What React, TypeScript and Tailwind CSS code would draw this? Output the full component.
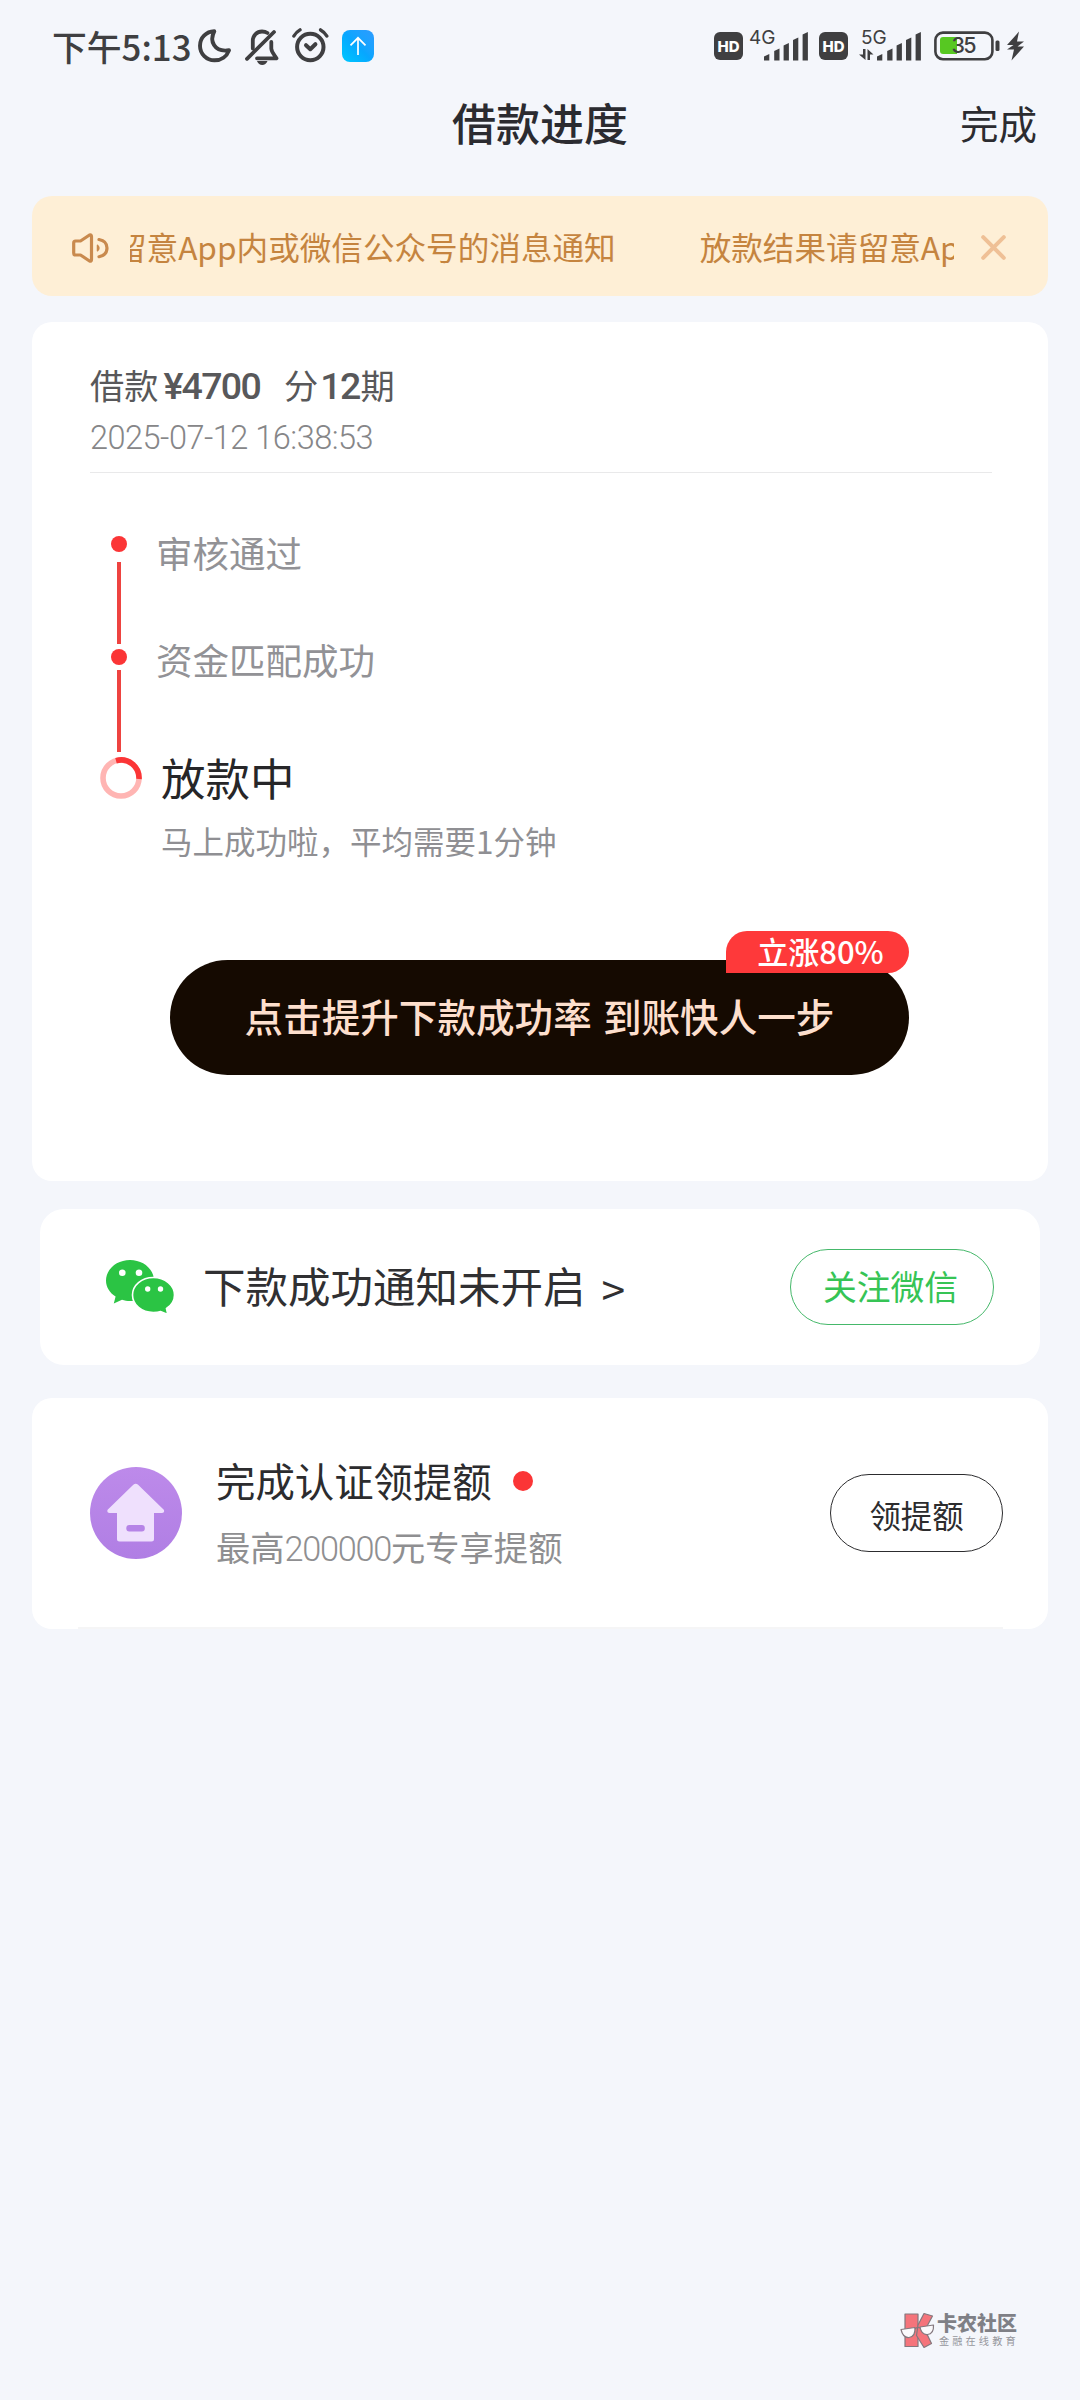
import { type FC } from 'react'

const SIGNAL_BARS = [
  { x: 0, h: 7 },
  { x: 10.2, h: 12.5 },
  { x: 19.6, h: 18 },
  { x: 29, h: 23.5 },
  { x: 38.6, h: 29 },
]

const SignalBars: FC = () => (
  <svg width={44} height={30} viewBox="0 0 44 30" fill="#3f3f41">
    {SIGNAL_BARS.map(({ x, h }) => (
      <path key={x} d={`M${x} ${29 - h + 2.5} L${x + 5.3} ${29 - h} V28.5 H${x} Z`} />
    ))}
  </svg>
)

const HdBadge: FC<{ className?: string }> = ({ className = '' }) => (
  <div
    className={`flex h-7 w-[29px] shrink-0 items-center justify-center rounded-md bg-[#3f3f41] font-[Inter] text-[15px] leading-none font-extrabold text-white ${className}`}
  >
    HD
  </div>
)

const MoonIcon: FC = () => (
  <svg width={33} height={34} viewBox="0 0 33 34" fill="none" stroke="#3f3f41" strokeWidth={3.9} strokeLinejoin="round">
    <path d="M16.3 2.3C11.5 11.5 15.5 23.5 31 21.3C28.8 27.3 23.3 31.3 16.5 31.3A14.4 14.6 0 0 1 2 16.7C2 8.9 8 2.6 16.3 2.3Z" />
  </svg>
)

const BellOffIcon: FC = () => (
  <svg width={34} height={37} viewBox="0 0 34 37" fill="none" stroke="#3f3f41" strokeWidth={3.8} strokeLinecap="round" strokeLinejoin="round">
    <path d="M2 29.8L29 3" />
    <path d="M7.8 19.5V12C7.8 6.3 12 2.5 17 2.5C19 2.5 21 3 22.5 4" />
    <path d="M26.3 13V19.5C26.5 23.5 30 26.5 31.5 29.3H12" />
    <path d="M12 32H22.5C21.5 34.8 19.5 36 17.2 36C15 36 13 34.8 12 32Z" fill="#3f3f41" stroke="none" />
  </svg>
)

const AlarmIcon: FC = () => (
  <svg width={37} height={36} viewBox="0 0 37 36" fill="none" stroke="#3f3f41" strokeWidth={4} strokeLinecap="round">
    <circle cx={18.3} cy={19} r={13.2} />
    <path d="M14 17.2L18.3 21.2L23.4 16.2" strokeLinejoin="round" />
    <path d="M1.9 8C3.4 5.4 5.4 3.4 8 1.9" strokeWidth={3.4} />
    <path d="M28.6 1.9C31.3 3.4 33.4 5.4 34.8 8" strokeWidth={3.4} />
  </svg>
)

const StatusBar: FC = () => (
  <div className="flex h-[92px] items-center pl-[52px] text-[#3f3f41]">
    <span className="w-[144px] text-[34.8px] leading-[44px] font-medium whitespace-nowrap">下午5:13</span>
    <div className="ml-[2px] flex items-center">
      <MoonIcon />
      <div className="ml-[14px] pt-[2px]">
        <BellOffIcon />
      </div>
      <div className="ml-[13px]">
        <AlarmIcon />
      </div>
      <div className="ml-[13px] flex size-8 items-center justify-center rounded-lg bg-linear-to-tr from-[#00c8ff] via-[#08a6ff] to-[#2b9bff]">
        <svg width={18} height={20} viewBox="0 0 18 20" fill="none" stroke="white" strokeWidth={1.7}>
          <path d="M9 19V1.8M1.5 9.3L9 1.8L16.5 9.3" />
        </svg>
      </div>
    </div>

    <div className="ml-auto flex items-center pr-[56px]">
      <HdBadge />
      <div className="relative ml-[21px] flex h-[30px] pt-px">
        <SignalBars />
        <span className="absolute -top-1 -left-[15px] font-[Inter] text-[19px] leading-[22px]">4G</span>
      </div>
      <HdBadge className="ml-[11px]" />
      <div className="relative ml-[29px] flex h-[30px] pt-px">
        <SignalBars />
        <span className="absolute -top-1 -left-[16px] font-[Inter] text-[19px] leading-[22px]">5G</span>
        <svg className="absolute top-[18px] -left-[18px]" width={15} height={11} viewBox="0 0 15 11" fill="#3f3f41">
          <path d="M4 0H6.5V11L0 5.5H4ZM8.5 0L14.5 5.5H11V11H8.5Z" />
        </svg>
      </div>
      {/* 电池 */}
      <svg className="ml-[13px]" width={66} height={30} viewBox="0 0 66 30">
        <rect x={1.4} y={1.6} width={57} height={26.6} rx={7.5} fill="none" stroke="#3f3f41" strokeWidth={2.6} />
        <path d="M9 6H23V23H9Q6 23 6 20V9Q6 6 9 6Z" fill="#57c822" />
        <rect x={61.5} y={9.5} width={4} height={10.5} rx={1.5} fill="#3f3f41" />
        <text x={30} y={22.2} textAnchor="middle" fontFamily="Inter" fontSize={21.5} fontWeight={500} fill="#3f3f41" textLength={25}>
          35
        </text>
      </svg>
      <svg className="ml-[7px]" width={17} height={30} viewBox="0 0 17 30" fill="#3f3f41">
        <path d="M12 .5L0 14H6.500L0 18.500H7L4.500 29.500L17 15.500H10.500L17 10.500H10Z" />
      </svg>
    </div>
  </div>
)

const Header: FC = () => (
  <div className="grid h-[60px] grid-cols-[1fr_auto_1fr] items-center">
    <span />
    <span className="text-[44px] leading-[60px] font-medium text-[#2b2b30]">借款进度</span>
    <span className="pr-[43px] text-right text-[38.5px] leading-[56px] text-[#2b2b30]">完成</span>
  </div>
)

const Notice: FC = () => (
  <div className="mx-8 mt-11 flex h-[100px] items-center rounded-[20px] bg-[#feefd6] pl-10">
    <svg className="mt-[3px]" width={37} height={30} viewBox="0 0 37 30" fill="none" stroke="#c98a4e" strokeWidth={3.2} strokeLinecap="round" strokeLinejoin="round">
      <path d="M3.5 8H8.5L17.5 2Q19.5 1.2 19.5 3.5V26.5Q19.5 28.8 17.5 28L8.5 22H3.5Q1.7 22 1.7 20V10Q1.7 8 3.5 8Z" />
      <path d="M25.5 12.2Q28.3 15 25.5 17.8Z" fill="#c98a4e" strokeWidth={1.5} />
      <path d="M27 6.5C32.5 7.5 35 11 35 15C35 19 32.5 22.5 27 23.7" />
    </svg>
    {/* 滚动文案 */}
    <div className="ml-[21px] flex w-[824px] overflow-hidden text-[31.6px] leading-[44px] whitespace-nowrap text-[#c5843f]">
      <span className="-ml-[173px]">放款结果请留意App内或微信公众号的消息通知</span>
      <span className="ml-[84px]">放款结果请留意App内或微信公众号的消息通知</span>
    </div>
    <svg className="mt-[3px] ml-[27px]" width={25} height={25} viewBox="0 0 25 25" fill="none" stroke="#efc096" strokeWidth={4} strokeLinecap="round">
      <path d="M2.2 2.2L22.8 22.8M22.8 2.2L2.2 22.8" />
    </svg>
  </div>
)

const Spinner: FC = () => (
  <svg width={42} height={42} viewBox="0 0 42 42" fill="none" strokeWidth={5.6}>
    <circle cx={21} cy={21} r={18} stroke="#ffb5b3" />
    <path d="M16 3.7A18 18 0 0 1 39 22" stroke="#fb3536" />
  </svg>
)

const Progress: FC = () => (
  <div className="flex pl-[68px]">
    <div className="flex w-[42px] flex-col items-start pt-[63px]">
      <i className="ml-[10.5px] size-4 rounded-full bg-[#fb3536]" />
      <i className="mt-[10px] ml-[17px] h-[82px] w-[4px] bg-[#ee4340]" />
      <i className="mt-[5px] ml-[10.5px] size-4 rounded-full bg-[#fb3536]" />
      <i className="mt-[5px] ml-[17px] h-[82px] w-[4px] bg-[#ee4340]" />
      <div className="mt-[5px]">
        <Spinner />
      </div>
    </div>
    <div className="flex flex-col pt-[60px] pl-[14px] text-[36.5px] leading-10 text-[#929296]">
      <span>审核通过</span>
      <span className="mt-[67px]">资金匹配成功</span>
      <span className="mt-[72px] ml-[5px] text-[44.5px] leading-[50px] text-[#262628]">放款中</span>
      <span className="mt-[18px] ml-[5px] text-[31.5px] leading-10 text-[#8f8f93]">马上成功啦，平均需要1分钟</span>
    </div>
  </div>
)

const LoanCard: FC = () => (
  <div className="mx-8 mt-[26px] h-[859px] rounded-[20px] bg-white pt-[38px]">
    <div className="flex h-12 items-baseline pl-[58px] text-[34.2px] leading-[48px] text-[#58585a]">
      <span>借款</span>
      <b className="ml-[5px] font-[Roboto] text-[37.5px] font-medium tracking-[-1.7px]">¥4700</b>
      <span className="ml-[24px]">分</span>
      <b className="ml-[2px] font-[Roboto] text-[37.5px] font-medium tracking-[-1.7px]">12</b>
      <span className="ml-px">期</span>
    </div>
    <p className="mt-3 pl-[58px] font-[Roboto] text-[32.5px] leading-9 font-light tracking-[-0.5px] text-[#868688]">
      2025-07-12 16:38:53
    </p>
    <div className="mt-4 mr-14 ml-[58px] h-px bg-[#e9e9ea]" />
    <Progress />
    <div className="relative mt-[100px] ml-[138px] flex h-[115px] w-[739px] items-center justify-center rounded-full bg-[#150a01] pb-1 text-[38.6px] font-medium [word-spacing:2.500px] text-[#fddfcd]">
      点击提升下款成功率 到账快人一步
      <div className="absolute -top-[29px] right-0 flex h-[42px] w-[183px] items-center justify-center rounded-[21px] rounded-bl-none bg-[#fe393a] pb-1 pl-[6px] text-[31px] leading-none text-white">
        立涨80%
      </div>
    </div>
  </div>
)

const WechatIcon: FC = () => (
  <svg width={69} height={55} viewBox="0 0 69 55">
    <g fill="#2bc444">
      <path d="M24 0C37.3 0 48 9.2 48 20.5S37.3 41 24 41C21.2 41 18.6 40.6 16 39.7L7.8 43.5L9.6 36.6C3.7 32.8 0 27 0 20.5C0 9.2 10.7 0 24 0Z" />
      <path
        d="M47.3 17.5C59 17.5 68.5 25.3 68.5 35C68.5 40.5 65.5 45.3 60.5 48.5L61.8 54.5L54.7 51.5C52.3 52.3 49.8 52.5 47.3 52.5C35.6 52.5 26.5 44.7 26.5 35S35.6 17.5 47.3 17.5Z"
        stroke="white"
        strokeWidth={1.6}
      />
    </g>
    <g fill="white">
      <circle cx={16.3} cy={12.7} r={3.3} />
      <circle cx={33} cy={12.7} r={3.3} />
      <circle cx={41.7} cy={29} r={2.7} />
      <circle cx={54.5} cy={29} r={2.7} />
    </g>
  </svg>
)

const WechatCard: FC = () => (
  <div className="mx-10 mt-7 flex h-[156px] items-center rounded-3xl bg-white pl-[66px]">
    <WechatIcon />
    <span className="ml-[28px] pb-[5px] text-[42.5px] leading-[60px] text-[#303032]">
      下款成功通知未开启<span className="ml-[16px] inline-block translate-y-[3px]">&gt;</span>
    </span>
    <button className="mr-[46px] ml-auto flex h-[76px] w-[204px] items-center justify-center rounded-full border border-[#45b86a] pr-[3px] pb-[3px] text-[33.8px] leading-none text-[#36c455]">
      关注微信
    </button>
  </div>
)

const HouseIcon: FC = () => (
  <svg width={92} height={92} viewBox="0 0 92 92">
    <defs>
      <linearGradient id="disc" x1="0" y1="0" x2="0" y2="1">
        <stop offset="0" stopColor="#bd8aea" />
        <stop offset="1" stopColor="#b07ee4" />
      </linearGradient>
    </defs>
    <circle cx={46} cy={46} r={46} fill="url(#disc)" />
    <path
      d="M43.3 17.8Q45.7 15.5 48.1 17.8L73.8 42.8Q75 46 72 46H64V72Q64 74.5 61.5 74.5H29.5Q27 74.5 27 72V46H19.5Q16.5 46 17.6 42.8Z"
      fill="#efe0fd"
    />
    <rect x={36.3} y={58} width={18.5} height={6.5} rx={3} fill="#b684e7" />
  </svg>
)

const QuotaCard: FC = () => (
  <div className="mx-8 mt-[33px] flex h-[231px] flex-col rounded-[20px] bg-white">
    <div className="flex h-[229px] items-start pl-[58px]">
      <div className="mt-[69px]">
        <HouseIcon />
      </div>
      <div className="mt-[54px] ml-[34px]">
        <div className="flex h-14 items-center">
          <span className="text-[39.4px] leading-[56px] text-[#2c2c2e]">完成认证领提额</span>
          <i className="mt-[2px] ml-[21px] size-5 rounded-full bg-[#fb3536]" />
        </div>
        <p className="mt-[14px] text-[34.3px] leading-[48px] text-[#8f8f91]">
          最高<span className="font-[Roboto] font-light tracking-[-1.3px]">200000</span>元专享提额
        </p>
      </div>
      <button className="mt-[76px] mr-[45px] ml-auto flex h-[78px] w-[173px] items-center justify-center rounded-full border-[1.5px] border-[#2c2c2e] text-[31.4px] leading-none text-[#2c2c2e]">
        <span className="pt-[3px]">领提额</span>
      </button>
    </div>
    <div className="mr-[45px] ml-[46px] h-[2px] bg-[#f5f5f6]" />
  </div>
)

const CommunityMark: FC = () => (
  <div className="mt-[683px] ml-[900px] flex items-start">
    <svg width={35} height={37} viewBox="0 0 35 37" stroke="#84787e" strokeWidth={1.2} strokeLinejoin="round">
      <rect x={5} y={2} width={13} height={32.5} fill="#f5747b" />
      <path d="M24 1.5L32.5 4L25 18L31.5 31.5L24 35.5L16.5 23.5L18 13Z" fill="#f5747b" />
      <path d="M1 17.5L15 15.5Q15.5 25 9 25.5Q3 26 1 17.5Z" fill="#fbfafc" />
      <path d="M20 15L33.5 13Q34 22 27.5 22.5Q21.5 23 20 15Z" fill="#fbfafc" />
      <path d="M15 17Q17.5 14.5 20 16" fill="none" />
    </svg>
    <div className="ml-[2px] flex flex-col text-[#7f8086]">
      <span className="text-[20px] leading-[22px] font-black">卡农社区</span>
      <span className="ml-[2px] text-[10.2px] leading-[14px] tracking-[3.1px] whitespace-nowrap text-[#96979d]">金融在线教育</span>
    </div>
  </div>
)

export default function App() {
  return (
    <div className="h-[2400px] w-[1080px] overflow-hidden bg-[#f4f6fb] font-['Noto_Sans_CJK_SC',sans-serif]">
      <StatusBar />
      <Header />
      <Notice />
      <LoanCard />
      <WechatCard />
      <QuotaCard />
      <CommunityMark />
    </div>
  )
}
